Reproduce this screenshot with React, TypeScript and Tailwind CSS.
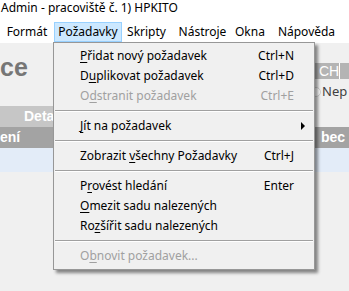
import React from 'react';

type Item = {
  label: React.ReactNode;
  shortcut?: string;
  disabled?: boolean;
  submenu?: boolean;
};

const U = ({ children }: { children: React.ReactNode }) => (
  <span className="underline underline-offset-2">{children}</span>
);

const groups: Item[][] = [
  [
    { label: <><U>P</U>řidat nový požadavek</>, shortcut: 'Ctrl+N' },
    { label: <>D<U>u</U>plikovat požadavek</>, shortcut: 'Ctrl+D' },
    { label: <>O<U>d</U>stranit požadavek</>, shortcut: 'Ctrl+E', disabled: true },
  ],
  [{ label: <><U>J</U>ít na požadavek</>, submenu: true }],
  [{ label: <>Zobrazit <U>v</U>šechny Požadavky</>, shortcut: 'Ctrl+J' }],
  [
    { label: <>P<U>r</U>ovést hledání</>, shortcut: 'Enter' },
    { label: <><U>O</U>mezit sadu nalezených</> },
    { label: <>Ro<U>z</U>šířit sadu nalezených</> },
  ],
  [{ label: <>O<U>b</U>novit požadavek...</>, disabled: true }],
];

// menu bar titles with the widths of their hit boxes
const menus = [
  { name: 'Formát', w: 'w-[54px]' },
  { name: 'Požadavky', w: 'w-[68px]' },
  { name: 'Skripty', w: 'w-[49px]' },
  { name: 'Nástroje', w: 'w-[63px]' },
  { name: 'Okna', w: 'w-[31px]' },
  { name: 'Nápověda', w: 'w-[83px]' },
];

const MenuRow = ({ item }: { item: Item }) => (
  <div
    className={`h-[20px] flex items-center pl-[26px] pr-[20px] ${
      item.disabled ? 'text-[#a0a0a0]' : 'text-black'
    }`}
  >
    <span className="flex-1">{item.label}</span>
    {item.shortcut && <span>{item.shortcut}</span>}
    {item.submenu && (
      <svg width="5" height="8" viewBox="0 0 5 8" className="-mr-[12px]">
        <path d="M0 0 L4 4 L0 8 Z" fill="#000" />
      </svg>
    )}
  </div>
);

export default function App() {
  return (
    <div className="relative w-[349px] h-[291px] overflow-hidden bg-[#f0f0f0] text-[12px] text-black font-['Segoe_UI','Noto_Sans',sans-serif]">
      <div className="h-[20px] bg-white leading-[16px] pl-[1px]">
        Admin - pracoviště č. 1) HPKITO
      </div>
      <div className="h-[23px] bg-white flex items-start pt-[2px]">
        {menus.map((m) => (
          <div
            key={m.name}
            className={`${m.w} h-[20px] text-center whitespace-nowrap leading-[18px] border ${
              m.name === 'Požadavky'
                ? 'bg-[#cce8ff] border-[#99d1ff]'
                : 'border-transparent'
            }`}
          >
            {m.name}
          </div>
        ))}
      </div>

      <div className="font-['Liberation_Sans',sans-serif]">
        <div className="h-[63px] flex justify-between">
          <div className="pt-[10px] text-[25px] font-bold text-[#767676] leading-[28px]">
            ce
          </div>
          <div className="w-[34px] pt-[20px]">
            <div className="flex h-[16px]">
              <div className="w-[24px] bg-[#b4b4b4] text-white text-[14px] leading-[16px] pl-[4px]">
                CH
              </div>
              <div className="w-[1px] bg-white" />
              <div className="flex-1 bg-[#b4b4b4]" />
            </div>
            <div className="flex items-center mt-[3px] text-[13px] text-[#404040] font-['Segoe_UI','Noto_Sans',sans-serif]">
              <span className="w-[10px] h-[10px] rounded-full border border-[#d0d0d0] bg-white -ml-[4px] mr-[1px]" />
              Nep
            </div>
          </div>
        </div>
        <div className="h-[21px] flex">
          <div className="w-[120px] bg-[#c6c6c6] text-white font-bold text-[14px] leading-[21px] pl-[24px]">
            Detail
          </div>
        </div>
        <div className="h-[21px] bg-[#a3a3a3] flex justify-between text-white font-bold text-[14px] leading-[20px]">
          <span>ení</span>
          <span className="pr-[4px]">bec</span>
        </div>
        <div className="h-[24px] bg-[#e3ecf8]" />
      </div>

      <div className="absolute left-[53px] top-[42px] w-[262px] bg-[#f0f0f0] border border-[#979797] py-[3px] shadow-[3px_3px_3px_rgba(0,0,0,0.45)]">
        {groups.map((g, i) => (
          <div key={i}>
            {i > 0 && (
              <div className="h-[10px] flex flex-col justify-center">
                <div className="h-[1px] bg-[#a0a0a0] mx-[1px]" />
                <div className="h-[1px] bg-white mx-[1px]" />
              </div>
            )}
            {g.map((item, j) => (
              <MenuRow key={j} item={item} />
            ))}
          </div>
        ))}
      </div>
    </div>
  );
}
